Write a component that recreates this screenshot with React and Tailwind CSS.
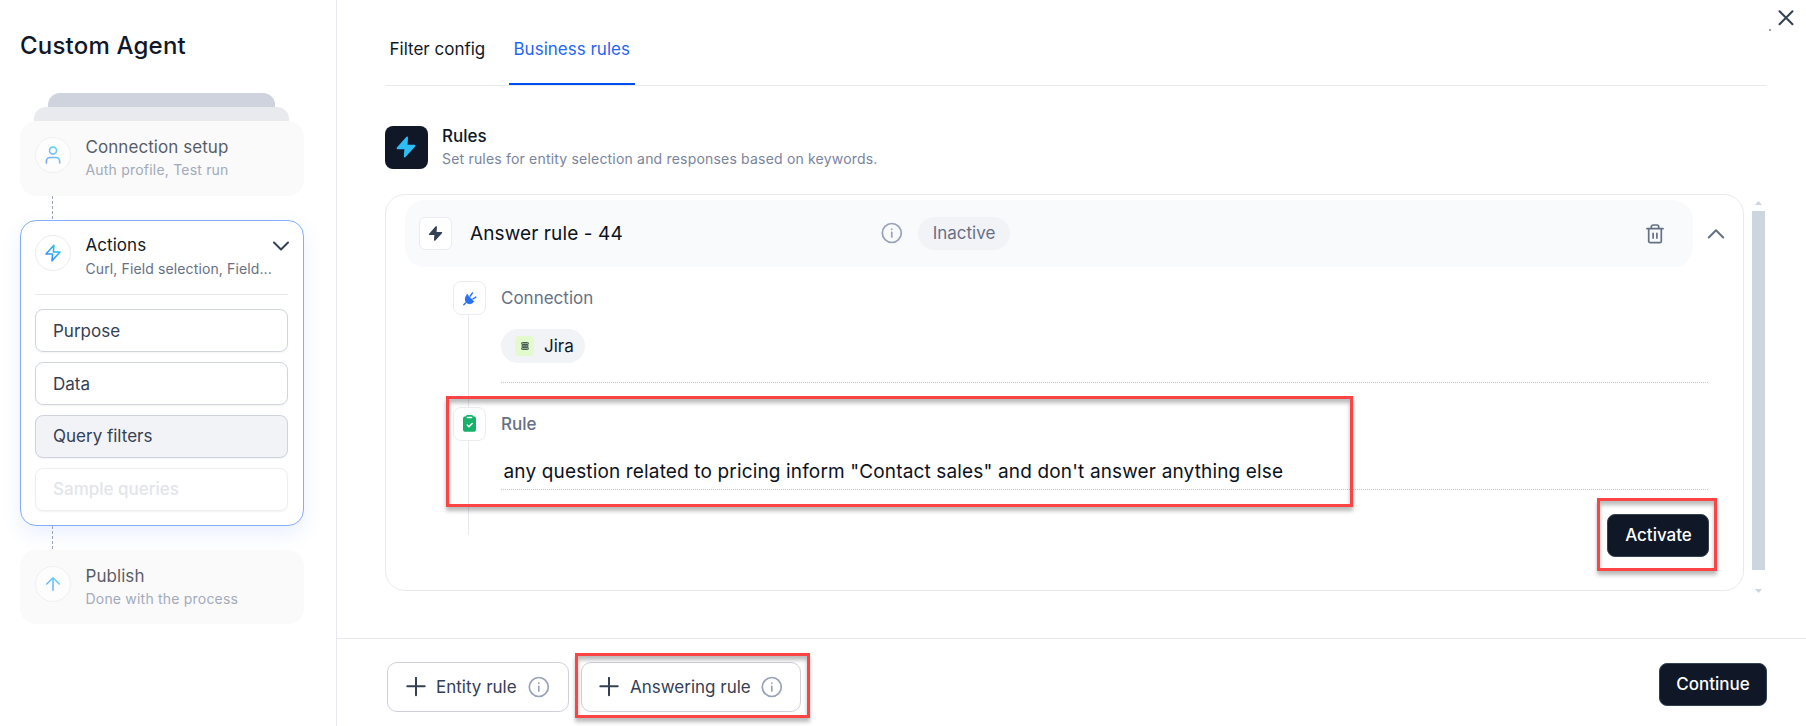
import React from "react";

const BOLT = "M13 2.600 3.600 13.200H11.500L10.800 21.400 20.400 10.800H12.500z";

function Info({ className = "" }) {
  return (
    <svg className={"size-[22px] shrink-0 " + className} viewBox="0 0 22 22" fill="none" stroke="#98a2b8" strokeWidth="1.7" strokeLinecap="round">
      <circle cx="10.800" cy="11" r="9.500" />
      <path d="M10.800 10.4v4.6" />
      <path d="M10.800 7.2v.1" />
    </svg>
  );
}

function Plus() {
  return (
    <svg className="size-5 shrink-0" viewBox="0 0 20 20" stroke="#344054" strokeWidth="2" strokeLinecap="round">
      <path d="M10 .8v17.400M1.300 9.300h17.400" />
    </svg>
  );
}

function StepIcon({ children }) {
  return (
    <div className="flex size-9 shrink-0 items-center justify-center rounded-full border border-[#ececf0] bg-white">
      <svg className="-ml-px size-5" viewBox="0 0 24 24" fill="none" stroke="url(#g)" strokeWidth="1.900" strokeLinecap="round" strokeLinejoin="round">
        <defs>
          <linearGradient id="g" gradientUnits="userSpaceOnUse" x1="20" y1="3" x2="5" y2="20">
            <stop offset="0" stopColor="#1fd0f5" />
            <stop offset="1" stopColor="#3f83fb" />
          </linearGradient>
        </defs>
        {children}
      </svg>
    </div>
  );
}

function Step({ title, sub, className, children }) {
  return (
    <div className={"flex shrink-0 gap-[14px] rounded-2xl bg-[#fafafb] px-[15px] pt-4 " + className}>
      <div className="opacity-70">
        <StepIcon>{children}</StepIcon>
      </div>
      <div className="flex flex-col pl-[0.5px] opacity-70">
        <span className="text-[17px] leading-5 tracking-[0.06px] text-[#101828]">{title}</span>
        <span className="pt-[3px] text-sm leading-5 tracking-[0.2px] text-[#7d89a0]">{sub}</span>
      </div>
    </div>
  );
}

function Callout({ className }) {
  return (
    <div
      className={
        "pointer-events-none absolute border-[3px] border-[#fd4444] shadow-[0_4px_4px_#00000045,inset_0_4px_4px_#00000045] " + className
      }
    />
  );
}

function Dashes() {
  return <div className="ml-8 h-6 w-px shrink-0 bg-[repeating-linear-gradient(to_bottom,#98a2b8_0_3px,transparent_3px_5px)]" />;
}

function SubItem({ children, className }) {
  return (
    <div className={"flex h-[43px] items-center rounded-lg border pl-[17px] text-[17px] shadow-[0_1px_2px_#1018280d] " + className}>
      {children}
    </div>
  );
}

function Sidebar() {
  return (
    <aside className="flex w-[337px] shrink-0 flex-col border-r border-[#e8e8ee] pl-5 pr-8">
      <h1 className="mt-[30px] h-8 text-2xl font-medium leading-8 tracking-[0.2px] text-[#101828]">Custom Agent</h1>
      <div className="ml-7 mr-[29px] mt-[31px] h-3.5 shrink-0 rounded-t-xl bg-[#cfd3dd]" />
      <div className="ml-3.5 mr-[15px] h-3.5 shrink-0 rounded-t-xl bg-[#e9eaee]" />
      <Step title="Connection setup" sub="Auth profile, Test run" className="h-[75px]">
        <circle cx="12" cy="6.700" r="4.200" />
        <path d="M20 21.500v-2a4.500 4.500 0 0 0-4.500-4.500h-7A4.500 4.500 0 0 0 4 19.500v2" />
      </Step>
      <Dashes />
      <div className="flex h-[306px] shrink-0 flex-col rounded-2xl border border-[#84adff] bg-white pl-3.5 pr-[15px] shadow-[0_8px_20px_#2970ff1a]">
        <div className="flex h-[74px] shrink-0 gap-[14px] border-b border-[#e8e8ec] pt-3.5">
          <StepIcon>
            <path d={BOLT} />
          </StepIcon>
          <div className="flex flex-1 flex-col pl-[0.5px]">
            <div className="flex h-5 items-center justify-between">
              <span className="text-[17px] leading-5 tracking-[0.06px] text-[#101828]">Actions</span>
              <svg className="-mr-px mt-px w-4" viewBox="0 0 16 10" fill="none" stroke="#344054" strokeWidth="2" strokeLinecap="round" strokeLinejoin="round">
                <path d="m1 1.5 7 7 7-7" />
              </svg>
            </div>
            <span className="pt-1 text-sm leading-5 tracking-[0.12px] text-[#667085]">Curl, Field selection, Field...</span>
          </div>
        </div>
        <nav className="mt-3.5 flex flex-col gap-2.5">
          <SubItem className="border-[#d0d5dd] pt-0.5 text-[#344054]">Purpose</SubItem>
          <SubItem className="border-[#d0d5dd] pt-0.5 text-[#344054]">Data</SubItem>
          <SubItem className="border-[#ced2dc] bg-[#f2f3f7] text-[#344054]">Query filters</SubItem>
          <SubItem className="border-[#efeff2] font-medium text-[#e3e5ea]">Sample queries</SubItem>
        </nav>
      </div>
      <Dashes />
      <Step title="Publish" sub="Done with the process" className="h-[74px]">
        <path d="M12 19.500V4.500M4.500 12 12 4.500l7.500 7.500" />
      </Step>
    </aside>
  );
}

function RuleCard() {
  return (
    <div className="flex h-[397px] w-[1359px] flex-col rounded-[20px] border border-[#eaeaed] pl-[19px] pt-[5px]">
      <div className="flex items-center">
        <div className="flex h-[67px] w-[1288px] items-center rounded-[20px] bg-[#f9fafc] pl-3.5 pr-[29px]">
          <div className="flex size-[33px] shrink-0 items-center justify-center rounded-md border border-[#eaecf0] bg-white">
            <svg className="-ml-px -mt-px size-[17px]" viewBox="0 0 24 24" fill="#344054" stroke="#344054" strokeWidth="2" strokeLinejoin="round">
              <path d={BOLT} />
            </svg>
          </div>
          <span className="w-[429px] shrink-0 pl-[18px] pt-0.5 text-[19px] tracking-[0.1px] text-[#0c111d]">Answer rule - 44</span>
          <Info className="-mt-px" />
          <span className="ml-[15px] flex h-[33px] w-[92px] items-center justify-center rounded-full bg-[#f2f3f7] text-[17px] text-[#667085]">Inactive</span>
          <svg className="ml-auto h-5 w-[18px]" viewBox="0 0 18 20" fill="none" stroke="#667085" strokeWidth="1.7" strokeLinecap="round" strokeLinejoin="round">
            <path d="M1 4.700h16M2.700 4.700v12.500a1.500 1.500 0 0 0 1.500 1.500h9.600a1.500 1.500 0 0 0 1.500-1.500V4.700M5.300 4.700V2.800A1.800 1.800 0 0 1 7.100 1h3.800a1.800 1.800 0 0 1 1.800 1.800v1.900M7.100 9.300v4.800M10.900 9.300v4.800" />
          </svg>
        </div>
        <svg className="ml-[14px] w-[18px]" viewBox="0 0 18 12" fill="none" stroke="#667085" strokeWidth="2" strokeLinecap="round" strokeLinejoin="round">
          <path d="M1.800 9.500 9 2.300l7.200 7.200" />
        </svg>
      </div>
      <div className="mr-[34px] mt-3.5 flex gap-[15px] pl-12">
        <div className="flex w-[33px] shrink-0 flex-col items-center">
          <div className="flex h-[34px] w-[33px] items-center justify-center rounded-lg border border-[#eaecf0] bg-white">
            <svg className="size-4" viewBox="0 0 16 16" fill="#2970ff" stroke="#2970ff" strokeLinecap="round" strokeLinejoin="round">
              <path d="M5.200 4.700 11.700 11.500C10.300 13.600 7.300 14.400 5 12.800S2.900 7 5.200 4.700z" />
              <path d="M3.800 12.800 1.800 14.700M8.300 6 10.500 2.900M10.800 9 13.800 7.100" strokeWidth="1.400" />
            </svg>
          </div>
          <div className="mr-0.5 h-[92px] w-px bg-[#e8e8ee]" />
          <div className="flex h-[34px] w-[33px] items-center justify-center rounded-lg border border-[#eaecf0] bg-white">
            <svg className="-ml-px -mt-px h-[17px] w-[13px]" viewBox="0 0 13 17">
              <rect y="1.200" width="13" height="15.600" rx="2.600" fill="#17b26a" />
              <rect x="3" y="0" width="7" height="3" rx="1.400" fill="#17b26a" />
              <path d="M4.300 2.500h4.400" stroke="white" strokeWidth="1.300" strokeLinecap="round" />
              <path d="m4.200 10 1.700 1.700 3.300-3.300" fill="none" stroke="white" strokeWidth="1.400" strokeLinecap="round" strokeLinejoin="round" />
            </svg>
          </div>
          <div className="mr-0.5 h-[94px] w-px bg-[#e8e8ee]" />
        </div>
        <div className="flex flex-1 flex-col">
          <span className="mt-[5px] text-[17px] leading-6 text-[#667085]">Connection</span>
          <div className="mt-[19px] flex h-[34px] w-[84px] items-center gap-2.5 rounded-full bg-[#f2f3f7] pl-3.5">
            <div className="flex h-5 w-[19px] items-center justify-center rounded bg-[#e3fbcc]">
              <svg className="size-2" viewBox="0 0 8 8" fill="#8fae8c" stroke="#3d4f4c" strokeWidth=".9">
                <rect x=".5" y=".5" width="7" height="2" rx=".9" />
                <rect x="1" y="3" width="6" height="2" rx=".5" />
                <rect x=".5" y="5.500" width="7" height="2" rx=".9" />
              </svg>
            </div>
            <span className="pt-0.5 text-[17px] text-[#101828]">Jira</span>
          </div>
          <div className="mt-[19px] h-px bg-[repeating-linear-gradient(to_right,#c4c8cf_0_1px,transparent_1px_2px)]" />
          <span className="mt-[29px] text-[17px] font-medium leading-6 text-[#667085]">Rule</span>
          <span className="mt-[22px] whitespace-nowrap pl-[2.5px] text-[19px] leading-7 tracking-[0.15px] text-[#0c111d]">
            any question related to pricing inform "Contact sales" and don't answer anything else
          </span>
          <div className="mt-[3px] h-px bg-[repeating-linear-gradient(to_right,#c4c8cf_0_1px,transparent_1px_2px)]" />
          <div className="mt-6 flex h-[43px] w-[102px] items-center justify-center self-end rounded-lg border border-[#344054] bg-[#101828] pl-px text-[17px] font-medium text-white">
            Activate
          </div>
        </div>
      </div>
    </div>
  );
}

function RuleButton({ children, className }) {
  return (
    <div className={"flex h-[50px] items-center rounded-[10px] border border-[#d0d0dd] text-[17px] text-[#344054] " + className}>
      <Plus />
      <span className="mr-auto whitespace-nowrap pl-2.5 pt-0.5">{children}</span>
      <Info />
    </div>
  );
}

export default function App() {
  return (
    <div className="relative flex h-[726px] w-[1806px] overflow-hidden bg-white font-['Inter',sans-serif]">
      <Sidebar />
      <main className="flex flex-1 flex-col">
        <div className="ml-12 mr-[39px] flex h-[86px] border-b border-[#eaeaed] text-[17px]">
          <span className="h-[85px] w-[124px] pl-[4.5px] pt-[37px] leading-6 text-[#101828]">Filter config</span>
          <span className="h-[85px] w-[126px] border-b-2 border-[#004eeb] pl-[4.5px] pt-[37px] leading-6 text-[#1f66f5]">Business rules</span>
        </div>
        <div className="ml-12 mt-10 flex h-[43px] gap-3.5">
          <div className="flex size-[43px] items-center justify-center rounded-lg bg-[#101828]">
            <svg className="-ml-px -mt-px size-6" viewBox="0 0 24 24" fill="#2dbdf6" stroke="#2dbdf6" strokeWidth="2" strokeLinejoin="round">
              <path d={BOLT} />
            </svg>
          </div>
          <div className="flex flex-col">
            <span className="text-[17px] font-medium leading-5 text-[#101828]">Rules</span>
            <span className="pt-[3px] text-sm leading-5 tracking-[0.19px] text-[#7a849b]">Set rules for entity selection and responses based on keywords.</span>
          </div>
        </div>
        <div className="ml-12 mt-[25px] flex gap-2">
          <RuleCard />
          <div className="flex w-[13px] flex-col items-center pt-[7px]">
            <svg className="h-1 w-[7px]" viewBox="0 0 7 4" fill="#cdd5df"><path d="M3.500 0 7 4H0z" /></svg>
            <div className="mt-1.5 h-[359px] w-full bg-[#cdd5df]" />
            <svg className="mt-[19px] h-1 w-[7px]" viewBox="0 0 7 4" fill="#cdd5df"><path d="M3.500 4 7 0H0z" /></svg>
          </div>
        </div>
        <footer className="mt-auto flex h-[88px] border-t border-[#eaeaed] pl-[50px] pr-[39px] pt-[23px]">
          <RuleButton className="w-[182px] pl-[18px] pr-[18px]">Entity rule</RuleButton>
          <RuleButton className="ml-3 w-[220px] pl-[17px] pr-[17px]"><span className="pl-px">Answering rule</span></RuleButton>
          <div className="ml-auto mt-px flex h-[43px] w-[108px] items-center justify-center rounded-lg border border-[#344054] bg-[#101828] text-[17px] font-medium text-white">
            Continue
          </div>
        </footer>
      </main>
      <svg className="absolute left-[1778px] top-[10px] size-4" viewBox="0 0 16 16" stroke="#344054" strokeWidth="2" strokeLinecap="round">
        <path d="m1.500 1.300 13 13M14.500 1.300l-13 13" />
      </svg>
      <div className="absolute left-[1769px] top-[29px] size-0.5 bg-[#98a2b8]" />
      <Callout className="left-[446px] top-[396px] h-[111px] w-[907px]" />
      <Callout className="left-[1597px] top-[498px] h-[73px] w-[120px]" />
      <Callout className="left-[575px] top-[653px] h-[65px] w-[235px]" />
    </div>
  );
}
